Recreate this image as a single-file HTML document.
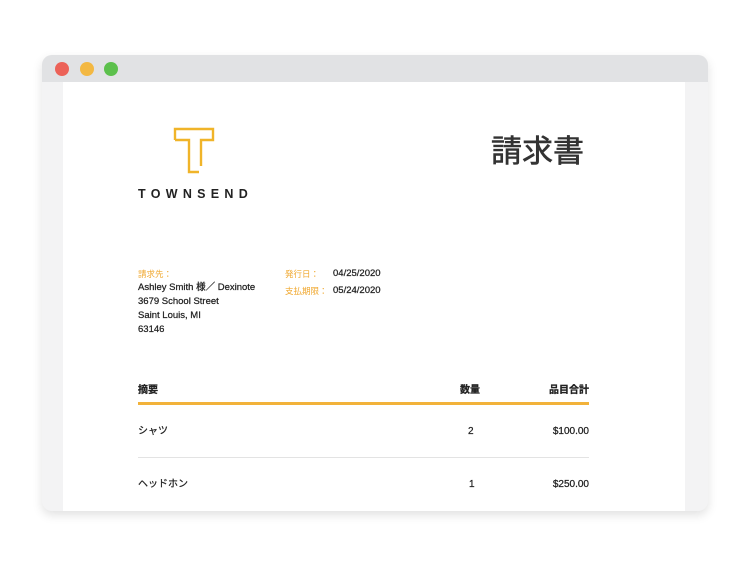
<!DOCTYPE html>
<html><head><meta charset="utf-8"><style>
*{margin:0;padding:0;box-sizing:border-box}
body{width:750px;height:563px;background:#fff;position:relative;overflow:hidden;font-family:"Liberation Sans","Noto Sans CJK JP",sans-serif;color:#2b2b2b}
.win{position:absolute;left:42px;top:55px;width:666px;height:456px;border-radius:10px;background:#f3f3f4;box-shadow:0 4px 10px rgba(0,0,0,.12);overflow:hidden}
.bar{position:absolute;left:0;top:0;width:666px;height:27px;background:#e1e2e4}
.dot{position:absolute;top:7px;width:14px;height:14px;border-radius:50%}
.page{position:absolute;left:21px;top:27px;width:622px;height:429px;background:#fff}
.a{position:absolute;white-space:nowrap;line-height:14px}
.s{font-size:9.5px;color:#222;-webkit-text-stroke:0.25px #222}
.o{font-size:8.5px;color:#f0a830}
</style></head><body>
<div class="win">
<div class="bar"></div>
<div class="dot" style="left:13px;background:#ec6258"></div>
<div class="dot" style="left:38px;background:#f3b842"></div>
<div class="dot" style="left:62px;background:#5cc04c"></div>
<div class="page"></div>
</div>
<svg style="position:absolute;left:0;top:0" width="750" height="563">
<path d="M175 140 V129 H213 V140 H201 V166 M175 140 H189 V172 H199" fill="none" stroke="#f0b429" stroke-width="2.4"/>
</svg>
<div class="a" style="left:138px;top:187px;font-size:12.5px;font-weight:bold;letter-spacing:5.3px;color:#222">TOWNSEND</div>
<div class="a" style="left:491px;top:136px;font-size:31px;line-height:32px;color:#333;-webkit-text-stroke:0.6px #333">請求書</div>
<div class="a o" style="left:138px;top:267px">請求先：</div>
<div class="a s" style="left:138px;top:281px">Ashley Smith 様／ Dexinote</div>
<div class="a s" style="left:138px;top:295px">3679 School Street</div>
<div class="a s" style="left:138px;top:309px">Saint Louis, MI</div>
<div class="a s" style="left:138px;top:323px">63146</div>
<div class="a o" style="left:285px;top:267px">発行日：</div>
<div class="a s" style="left:333px;top:267px">04/25/2020</div>
<div class="a o" style="left:285px;top:284px">支払期限：</div>
<div class="a s" style="left:333px;top:284px">05/24/2020</div>
<div class="a s" style="left:138px;top:384px;font-size:10px;font-weight:bold">摘要</div>
<div class="a s" style="left:460px;top:384px;font-size:10px;font-weight:bold">数量</div>
<div class="a s" style="right:161px;top:384px;font-size:10px;font-weight:bold">品目合計</div>
<div class="a" style="left:138px;top:402px;width:451px;height:3px;background:#f2b23a"></div>
<div class="a s" style="left:138px;top:425px;font-size:10px">シャツ</div>
<div class="a s" style="left:468px;top:425px;font-size:10px">2</div>
<div class="a s" style="right:161px;top:425px;font-size:10px">$100.00</div>
<div class="a" style="left:138px;top:457px;width:451px;height:1px;background:#e3e3e3"></div>
<div class="a s" style="left:138px;top:478px;font-size:10px">ヘッドホン</div>
<div class="a s" style="left:469px;top:478px;font-size:10px">1</div>
<div class="a s" style="right:161px;top:478px;font-size:10px">$250.00</div>
</body></html>
